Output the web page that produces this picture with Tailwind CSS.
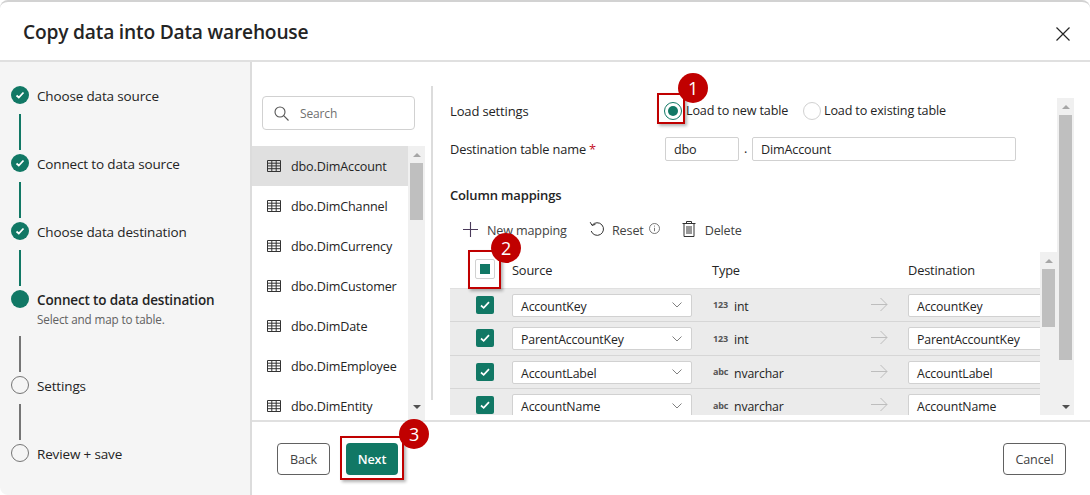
<!DOCTYPE html>
<html lang="en">
<head>
    <meta charset="UTF-8">
    <meta name="viewport" content="width=device-width, initial-scale=1.0">
    <title>Copy data into Data warehouse</title>
    <script src="https://cdn.jsdelivr.net/npm/@tailwindcss/browser@4"></script>
</head>
<body class="bg-white overflow-hidden font-['Open_Sans',sans-serif] text-[12.6px] text-[#242424] tracking-[-0.15px]">
<div class="relative w-[1090px] h-[495px] overflow-hidden bg-white">
  <div class="flex flex-col h-full rounded-lg border-t-2 border-[#d2d2d2] overflow-hidden">

    <!-- header -->
    <div class="flex items-center justify-between h-[60px] shrink-0 border-b-2 border-[#e0e0e0] pl-[23px] pr-[20px]">
      <h1 class="text-[19.2px] font-semibold tracking-[-0.2px] leading-none mt-[2px]">Copy data into Data warehouse</h1>
      <svg class="w-[14px] h-[14px] mt-[6px] text-[#242424]" viewBox="0 0 14 14" fill="none" stroke="currentColor" stroke-width="1.2"><path d="M.5.5l13 13M13.5.5l-13 13"/></svg>
    </div>

    <div class="flex flex-1 min-h-0">
      <!-- stepper -->
      <div class="w-[252px] shrink-0 bg-[#f5f5f5] border-r-2 border-[#dcdcdc] pl-[11px] pt-[24px] text-[13.5px]">
        <div class="flex items-center gap-[8px] h-[18px]">
          <div class="w-[18px] h-[18px] rounded-full bg-[#117865] flex items-center justify-center"><svg class="w-[10px] h-[10px]" viewBox="0 0 10 10" fill="none" stroke="white" stroke-width="1.8"><path d="M1.5 5.5l2.3 2L8.5 2.5"/></svg></div>
          <span class="pt-[2px]">Choose data source</span>
        </div>
        <div class="w-[2px] h-[36px] ml-[8px] mt-[10px] mb-[4px] bg-[#117865]"></div>
        <div class="flex items-center gap-[8px] h-[18px]">
          <div class="w-[18px] h-[18px] rounded-full bg-[#117865] flex items-center justify-center"><svg class="w-[10px] h-[10px]" viewBox="0 0 10 10" fill="none" stroke="white" stroke-width="1.8"><path d="M1.5 5.5l2.3 2L8.5 2.5"/></svg></div>
          <span class="pt-[2px]">Connect to data source</span>
        </div>
        <div class="w-[2px] h-[36px] ml-[8px] mt-[10px] mb-[4px] bg-[#117865]"></div>
        <div class="flex items-center gap-[8px] h-[18px]">
          <div class="w-[18px] h-[18px] rounded-full bg-[#117865] flex items-center justify-center"><svg class="w-[10px] h-[10px]" viewBox="0 0 10 10" fill="none" stroke="white" stroke-width="1.8"><path d="M1.5 5.5l2.3 2L8.5 2.5"/></svg></div>
          <span class="pt-[2px]">Choose data destination</span>
        </div>
        <div class="w-[2px] h-[36px] ml-[8px] mt-[10px] mb-[4px] bg-[#117865]"></div>
        <div class="flex items-center gap-[8px] h-[18px]">
          <div class="w-[18px] h-[18px] rounded-full bg-[#117865]"></div>
          <span class="font-semibold pt-[2px]">Connect to data destination</span>
        </div>
        <div class="ml-[26px] mt-[4px] h-[15px] text-[11.7px] leading-[15px] text-[#616161]">Select and map to table.</div>
        <div class="w-[2px] h-[36px] ml-[8px] mt-[9px] mb-[4px] bg-[#757575]"></div>
        <div class="flex items-center gap-[8px] h-[18px]">
          <div class="w-[18px] h-[18px] rounded-full border border-[#757575]"></div>
          <span class="pt-[2px]">Settings</span>
        </div>
        <div class="w-[2px] h-[36px] ml-[8px] mt-[10px] mb-[4px] bg-[#757575]"></div>
        <div class="flex items-center gap-[8px] h-[18px]">
          <div class="w-[18px] h-[18px] rounded-full border border-[#757575]"></div>
          <span class="pt-[2px]">Review + save</span>
        </div>
      </div>

      <div class="flex flex-col flex-1 min-w-0">
        <div class="flex h-[358px] shrink-0">
          <!-- table list -->
          <div class="w-[173px] shrink-0 flex flex-col">
            <div class="pl-[10px] pt-[34px] pb-[16px] pr-[10px]">
              <div class="flex items-center h-[34px] w-[153px] border border-[#d1d1d1] rounded-[4px] pl-[11px] gap-[11px] text-[12px] text-[#707070]">
                <svg class="w-[15px] h-[15px] text-[#555]" viewBox="0 0 15 15" fill="none" stroke="currentColor" stroke-width="1.1"><circle cx="6" cy="6" r="5"/><path d="M9.7 9.7L14.5 14.5"/></svg>
                <span class="pt-[2px]">Search</span>
              </div>
            </div>
            <div class="flex flex-1 min-h-0">
              <div class="w-[156px] overflow-hidden">
                <div class="flex items-center h-[40px] pl-[15px] gap-[10px] bg-[#e0e0e0]">
                  <svg class="w-[14px] h-[12px] text-[#333]" viewBox="0 0 14 12" fill="none" stroke="currentColor" stroke-width="1"><path d="M.5.5h13v11H.5zM.5 3.2h13M.5 5.9h13M.5 8.7h13M4.8.5v11M9.2.5v11"/></svg>
                  <span class="pt-[2px]">dbo.DimAccount</span>
                </div>
                <div class="flex items-center h-[40px] pl-[15px] gap-[10px]">
                  <svg class="w-[14px] h-[12px] text-[#333]" viewBox="0 0 14 12" fill="none" stroke="currentColor" stroke-width="1"><path d="M.5.5h13v11H.5zM.5 3.2h13M.5 5.9h13M.5 8.7h13M4.8.5v11M9.2.5v11"/></svg>
                  <span class="pt-[2px]">dbo.DimChannel</span>
                </div>
                <div class="flex items-center h-[40px] pl-[15px] gap-[10px]">
                  <svg class="w-[14px] h-[12px] text-[#333]" viewBox="0 0 14 12" fill="none" stroke="currentColor" stroke-width="1"><path d="M.5.5h13v11H.5zM.5 3.2h13M.5 5.9h13M.5 8.7h13M4.8.5v11M9.2.5v11"/></svg>
                  <span class="pt-[2px]">dbo.DimCurrency</span>
                </div>
                <div class="flex items-center h-[40px] pl-[15px] gap-[10px]">
                  <svg class="w-[14px] h-[12px] text-[#333]" viewBox="0 0 14 12" fill="none" stroke="currentColor" stroke-width="1"><path d="M.5.5h13v11H.5zM.5 3.2h13M.5 5.9h13M.5 8.7h13M4.8.5v11M9.2.5v11"/></svg>
                  <span class="pt-[2px]">dbo.DimCustomer</span>
                </div>
                <div class="flex items-center h-[40px] pl-[15px] gap-[10px]">
                  <svg class="w-[14px] h-[12px] text-[#333]" viewBox="0 0 14 12" fill="none" stroke="currentColor" stroke-width="1"><path d="M.5.5h13v11H.5zM.5 3.2h13M.5 5.9h13M.5 8.7h13M4.8.5v11M9.2.5v11"/></svg>
                  <span class="pt-[2px]">dbo.DimDate</span>
                </div>
                <div class="flex items-center h-[40px] pl-[15px] gap-[10px]">
                  <svg class="w-[14px] h-[12px] text-[#333]" viewBox="0 0 14 12" fill="none" stroke="currentColor" stroke-width="1"><path d="M.5.5h13v11H.5zM.5 3.2h13M.5 5.9h13M.5 8.7h13M4.8.5v11M9.2.5v11"/></svg>
                  <span class="pt-[2px]">dbo.DimEmployee</span>
                </div>
                <div class="flex items-center h-[40px] pl-[15px] gap-[10px]">
                  <svg class="w-[14px] h-[12px] text-[#333]" viewBox="0 0 14 12" fill="none" stroke="currentColor" stroke-width="1"><path d="M.5.5h13v11H.5zM.5 3.2h13M.5 5.9h13M.5 8.7h13M4.8.5v11M9.2.5v11"/></svg>
                  <span class="pt-[2px]">dbo.DimEntity</span>
                </div>
              </div>
              <!-- list scrollbar -->
              <div class="w-[17px] shrink-0 bg-[#f0f0f0] flex flex-col items-center pb-[5px]">
                <div class="h-[17px] flex items-center justify-center"><div class="w-0 h-0 border-x-[4px] border-x-transparent border-b-[4px] border-b-[#a6a6a6]"></div></div>
                <div class="w-[13px] h-[57px] bg-[#bfbfbf]"></div>
                <div class="flex-1"></div>
                <div class="h-[17px] flex items-center justify-center"><div class="w-0 h-0 border-x-[4px] border-x-transparent border-t-[4px] border-t-[#505050]"></div></div>
              </div>
            </div>
          </div>

          <div class="w-[2px] h-[314px] mt-[24px] ml-[6px] shrink-0 bg-[#dcdcdc]"></div>

          <!-- mapping pane -->
          <div class="flex-1 min-w-0 pl-[17px] pb-[5px] flex flex-col">
            <div class="flex flex-1 min-h-0">
              <div class="w-[607px] shrink-0 flex flex-col">
                <div class="flex items-center h-[26px] mt-[36px]">
                  <span class="w-[204px] shrink-0 text-[13px] font-medium mt-[1px]">Load settings</span>
                  <span class="w-[18px] h-[18px] shrink-0 rounded-full border border-[#117865] flex items-center justify-center mr-[4px] ml-[10px]"><span class="w-[10px] h-[10px] rounded-full bg-[#117865]"></span></span>
                  <span class="w-[117px] shrink-0">Load to new table</span>
                  <span class="w-[18px] h-[18px] shrink-0 rounded-full border border-[#d1d1d1] mr-[3px]"></span>
                  <span>Load to existing table</span>
                </div>
                <div class="flex items-center h-[24px] mt-[13px]">
                  <span class="w-[215px] shrink-0 text-[12.8px] font-medium pt-[2px]">Destination table name <span class="text-[#c50f1f]">*</span></span>
                  <span class="w-[74px] h-[24px] shrink-0 border border-[#d1d1d1] rounded-[2px] pl-[8px] leading-[24px]">dbo</span>
                  <span class="w-[13px] shrink-0 text-center">.</span>
                  <span class="w-[264px] h-[24px] shrink-0 border border-[#d1d1d1] rounded-[2px] pl-[8px] leading-[24px]">DimAccount</span>
                </div>
                <div class="mt-[24px] h-[20px] leading-[20px] text-[13px] font-semibold">Column mappings</div>
                <div class="flex items-center h-[24px] mt-[13px] pl-[13px]">
                  <svg class="w-[15px] h-[15px] shrink-0 mr-[9px] -mt-[2px]" viewBox="0 0 15 15" fill="none" stroke="#4a3a5a" stroke-width="1.1"><path d="M7.5 0v15M0 7.5h15"/></svg>
                  <span class="w-[80px] shrink-0 whitespace-nowrap text-[#424242] pt-[2px]">New mapping</span>
                  <svg class="w-[16px] h-[16px] shrink-0 ml-[22px] mr-[7px] -mt-[2px]" viewBox="0 0 16 16" fill="none" stroke="#333" stroke-width="1"><path d="M3.2 4.2A6.3 6.3 0 1 1 2.2 10M1.2 1.2l1.8 3.2 3.4-1"/></svg>
                  <span class="shrink-0 text-[#424242] pt-[2px]">Reset</span>
                  <svg class="w-[11px] h-[11px] shrink-0 ml-[5px] -mt-[4px]" viewBox="0 0 11 11" fill="none" stroke="#555" stroke-width="0.8"><circle cx="5.5" cy="5.5" r="5"/><path d="M5.5 4.8v3.4M5.5 2.6v1"/></svg>
                  <svg class="w-[14px] h-[16px] shrink-0 ml-[22px] mr-[9px] -mt-[2px]" viewBox="0 0 14 16" fill="none" stroke="#333" stroke-width="1"><path d="M.5 2.5h13M4.5 2.5V.5h5v2M2 2.5v13h10v-13M5 5v8M7 5v8M9 5v8"/></svg>
                  <span class="text-[#424242] pt-[2px]">Delete</span>
                </div>

                <!-- mapping table -->
                <div class="flex flex-1 min-h-0 mt-[10px]">
                  <div class="w-[590px] overflow-hidden shrink-0">
                    <div class="flex items-center h-[37px] border-b border-[#e0e0e0] font-medium text-[12.8px]">
                      <span class="w-[20px] h-[20px] shrink-0 ml-[25px] mr-[17px] mt-[-2px] border border-[#d1d1d1] rounded-[2px] bg-white flex items-center justify-center"><span class="w-[10px] h-[10px] bg-[#117865]"></span></span>
                      <span class="w-[200px] shrink-0 pt-[2px]">Source</span>
                      <span class="w-[196px] shrink-0 pt-[2px]">Type</span>
                      <span class="pt-[2px]">Destination</span>
                    </div>
                    <div class="flex items-center h-[33px] bg-[#ebebeb] border-b border-[#d6d6d6] text-[12.3px]">
                      <span class="w-[18px] h-[18px] shrink-0 ml-[26px] mr-[18px] rounded-[2px] bg-[#117865] flex items-center justify-center -mt-[1px]"><svg class="w-[12px] h-[12px]" viewBox="0 0 12 12" fill="none" stroke="white" stroke-width="1.7"><path d="M2 6.5l2.7 2.4L10 3.2"/></svg></span>
                      <span class="flex items-center justify-between shrink-0 w-[180px] h-[23px] bg-white border border-[#d1d1d1] rounded-[2px] pl-[8px] pr-[9px]"><span class="pt-[2px] leading-[19px]">AccountKey</span><svg class="w-[10px] h-[6px]" viewBox="0 0 10 6" fill="none" stroke="#808080"><path d="M.5.5L5 5 9.5.5"/></svg></span>
                      <span class="w-[21px] shrink-0 ml-[21px] text-[9px] font-bold text-[#555]">123</span>
                      <span class="w-[137px] shrink-0 pt-[4px]">int</span>
                      <svg class="w-[17px] h-[15px] shrink-0 mr-[20px] -mt-[2px]" viewBox="0 0 17 15" fill="none" stroke="#bdbdbd"><path d="M0 7.5h16M9.5 1l6.5 6.5L9.5 14"/></svg>
                      <span class="w-[140px] h-[23px] shrink-0 bg-white border border-[#d1d1d1] rounded-[2px] pl-[8px] leading-[23px]">AccountKey</span>
                    </div>
                    <div class="flex items-center h-[34px] bg-[#ebebeb] border-b border-[#d6d6d6] text-[12.3px]">
                      <span class="w-[18px] h-[18px] shrink-0 ml-[26px] mr-[18px] rounded-[2px] bg-[#117865] flex items-center justify-center -mt-[1px]"><svg class="w-[12px] h-[12px]" viewBox="0 0 12 12" fill="none" stroke="white" stroke-width="1.7"><path d="M2 6.5l2.7 2.4L10 3.2"/></svg></span>
                      <span class="flex items-center justify-between shrink-0 w-[180px] h-[23px] bg-white border border-[#d1d1d1] rounded-[2px] pl-[8px] pr-[9px]"><span class="pt-[2px] leading-[19px]">ParentAccountKey</span><svg class="w-[10px] h-[6px]" viewBox="0 0 10 6" fill="none" stroke="#808080"><path d="M.5.5L5 5 9.5.5"/></svg></span>
                      <span class="w-[21px] shrink-0 ml-[21px] text-[9px] font-bold text-[#555]">123</span>
                      <span class="w-[137px] shrink-0 pt-[4px]">int</span>
                      <svg class="w-[17px] h-[15px] shrink-0 mr-[20px] -mt-[2px]" viewBox="0 0 17 15" fill="none" stroke="#bdbdbd"><path d="M0 7.5h16M9.5 1l6.5 6.5L9.5 14"/></svg>
                      <span class="w-[140px] h-[23px] shrink-0 bg-white border border-[#d1d1d1] rounded-[2px] pl-[8px] leading-[23px]">ParentAccountKey</span>
                    </div>
                    <div class="flex items-center h-[33px] bg-[#ebebeb] border-b border-[#d6d6d6] text-[12.3px]">
                      <span class="w-[18px] h-[18px] shrink-0 ml-[26px] mr-[18px] rounded-[2px] bg-[#117865] flex items-center justify-center -mt-[1px]"><svg class="w-[12px] h-[12px]" viewBox="0 0 12 12" fill="none" stroke="white" stroke-width="1.7"><path d="M2 6.5l2.7 2.4L10 3.2"/></svg></span>
                      <span class="flex items-center justify-between shrink-0 w-[180px] h-[23px] bg-white border border-[#d1d1d1] rounded-[2px] pl-[8px] pr-[9px]"><span class="pt-[2px] leading-[19px]">AccountLabel</span><svg class="w-[10px] h-[6px]" viewBox="0 0 10 6" fill="none" stroke="#808080"><path d="M.5.5L5 5 9.5.5"/></svg></span>
                      <span class="w-[21px] shrink-0 ml-[21px] text-[9px] font-bold text-[#555]">abc</span>
                      <span class="w-[137px] shrink-0 pt-[4px]">nvarchar</span>
                      <svg class="w-[17px] h-[15px] shrink-0 mr-[20px] -mt-[2px]" viewBox="0 0 17 15" fill="none" stroke="#bdbdbd"><path d="M0 7.5h16M9.5 1l6.5 6.5L9.5 14"/></svg>
                      <span class="w-[140px] h-[23px] shrink-0 bg-white border border-[#d1d1d1] rounded-[2px] pl-[8px] leading-[23px]">AccountLabel</span>
                    </div>
                    <div class="flex items-center h-[34px] bg-[#ebebeb] border-b border-[#d6d6d6] text-[12.3px]">
                      <span class="w-[18px] h-[18px] shrink-0 ml-[26px] mr-[18px] rounded-[2px] bg-[#117865] flex items-center justify-center -mt-[1px]"><svg class="w-[12px] h-[12px]" viewBox="0 0 12 12" fill="none" stroke="white" stroke-width="1.7"><path d="M2 6.5l2.7 2.4L10 3.2"/></svg></span>
                      <span class="flex items-center justify-between shrink-0 w-[180px] h-[23px] bg-white border border-[#d1d1d1] rounded-[2px] pl-[8px] pr-[9px]"><span class="pt-[2px] leading-[19px]">AccountName</span><svg class="w-[10px] h-[6px]" viewBox="0 0 10 6" fill="none" stroke="#808080"><path d="M.5.5L5 5 9.5.5"/></svg></span>
                      <span class="w-[21px] shrink-0 ml-[21px] text-[9px] font-bold text-[#555]">abc</span>
                      <span class="w-[137px] shrink-0 pt-[4px]">nvarchar</span>
                      <svg class="w-[17px] h-[15px] shrink-0 mr-[20px] -mt-[2px]" viewBox="0 0 17 15" fill="none" stroke="#bdbdbd"><path d="M0 7.5h16M9.5 1l6.5 6.5L9.5 14"/></svg>
                      <span class="w-[140px] h-[23px] shrink-0 bg-white border border-[#d1d1d1] rounded-[2px] pl-[8px] leading-[23px]">AccountName</span>
                    </div>
                  </div>
                  <!-- table scrollbar -->
                  <div class="w-[17px] shrink-0 bg-[#f0f0f0] flex flex-col items-center">
                    <div class="h-[17px] flex items-center justify-center"><div class="w-0 h-0 border-x-[4px] border-x-transparent border-b-[4px] border-b-[#a6a6a6]"></div></div>
                    <div class="w-[13px] h-[58px] bg-[#bfbfbf]"></div>
                  </div>
                </div>
              </div>
              <!-- pane scrollbar -->
              <div class="w-[17px] shrink-0 mt-[36px] bg-[#f0f0f0] flex flex-col items-center">
                <div class="h-[17px] flex items-center justify-center"><div class="w-0 h-0 border-x-[4px] border-x-transparent border-b-[4px] border-b-[#a6a6a6]"></div></div>
                <div class="w-[13px] h-[245px] bg-[#bfbfbf]"></div>
                <div class="flex-1"></div>
                <div class="h-[17px] flex items-center justify-center"><div class="w-0 h-0 border-x-[4px] border-x-transparent border-t-[4px] border-t-[#505050]"></div></div>
              </div>
            </div>
          </div>
        </div>

        <!-- footer -->
        <div class="flex items-center flex-1 border-t-2 border-[#e0e0e0] pl-[25px] pr-[24px]">
          <button class="w-[53px] h-[32px] pt-[4px] border border-[#616161] rounded-[4px] text-[#424242]">Back</button>
          <button class="w-[52px] h-[32px] pt-[4px] ml-[16px] rounded-[4px] bg-[#117865] text-white font-semibold">Next</button>
          <button class="w-[63px] h-[32px] pt-[4px] ml-auto border border-[#616161] rounded-[4px] text-[#424242]">Cancel</button>
        </div>
      </div>
    </div>
  </div>

  <!-- callouts -->
  <div class="absolute left-[657px] top-[93px] w-[28px] h-[31px] border-[2px] border-[#c00000] shadow-[2px_2px_3px_rgba(0,0,0,0.3)]"></div>
  <div class="absolute left-[678px] top-[73px] w-[30px] h-[30px] rounded-full bg-[#c00000] text-white text-[18px] flex items-center justify-center">1</div>
  <div class="absolute left-[468px] top-[250px] w-[33px] h-[39px] border-[2px] border-[#c00000] shadow-[2px_2px_3px_rgba(0,0,0,0.3)]"></div>
  <div class="absolute left-[491px] top-[233px] w-[30px] h-[30px] rounded-full bg-[#c00000] text-white text-[18px] flex items-center justify-center">2</div>
  <div class="absolute left-[340px] top-[436px] w-[64px] h-[44px] border-[2px] border-[#c00000] shadow-[2px_2px_3px_rgba(0,0,0,0.3)]"></div>
  <div class="absolute left-[399px] top-[419px] w-[30px] h-[30px] rounded-full bg-[#c00000] text-white text-[18px] flex items-center justify-center">3</div>
</div>
</body>
</html>
